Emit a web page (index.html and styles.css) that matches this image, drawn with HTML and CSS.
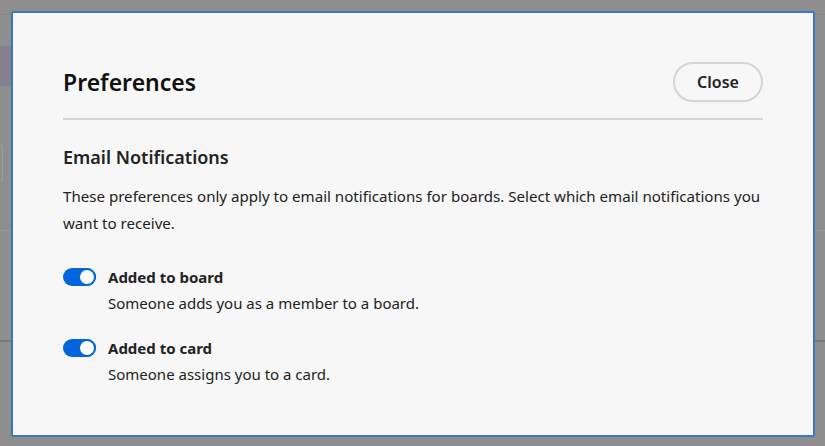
FILE: index.html
```html
<!DOCTYPE html>
<html lang="en">
<head>
<meta charset="utf-8">
<title>Preferences</title>
<link rel="stylesheet" href="styles.css">
</head>
<body>
<div class="backdrop">
  <div class="bg-top"></div>
  <div class="bg-tab"></div>
  <div class="bg-mid"><div class="bg-box"></div></div>
  <div class="bg-row"></div>
</div>
<div class="dialog" role="dialog">
  <div class="dialog-header">
    <h1 class="title">Preferences</h1>
    <button class="close-btn">Close</button>
  </div>
  <hr class="divider">
  <h2 class="section-title">Email Notifications</h2>
  <p class="intro">These preferences only apply to email notifications for boards. Select which email notifications you want to receive.</p>
  <div class="pref-list">
    <div class="pref">
      <span class="toggle"><span class="thumb"></span></span>
      <div class="pref-text">
        <div class="pref-name">Added to board</div>
        <div class="pref-desc">Someone adds you as a member to a board.</div>
      </div>
    </div>
    <div class="pref">
      <span class="toggle"><span class="thumb"></span></span>
      <div class="pref-text">
        <div class="pref-name">Added to card</div>
        <div class="pref-desc">Someone assigns you to a card.</div>
      </div>
    </div>
  </div>
</div>
</body>
</html>
```

FILE: styles.css
```css
html, body {
  margin: 0;
  height: 100%;
}
body {
  background: #8e8e8e;
  font-family: "Noto Sans", "Open Sans", sans-serif;
  color: #222;
  overflow: hidden;
  position: relative;
}
.backdrop {
  display: flex;
  flex-direction: column;
}
.bg-top {
  height: 14px;
  border-bottom: 1px solid #858585;
}
.bg-tab {
  margin-top: 31px;
  width: 11px;
  height: 40px;
  background: #857f90;
}
.bg-mid {
  height: 144px;
  border-bottom: 1px solid #9a9a9a;
  display: flex;
  align-items: center;
}
.bg-box {
  width: 2px;
  height: 34px;
  margin-top: 10px;
  border: 1px solid #9c9c9c;
  border-left: none;
}
.bg-row {
  height: 109px;
  border-bottom: 2px solid #7b7b7b;
}
.dialog {
  position: absolute;
  left: 11px;
  top: 11px;
  width: 700px;
  height: 422px;
  border: 2px solid #3a76c6;
  border-radius: 2px;
  background: #f7f7f7;
  padding: 0 50px;
  box-sizing: content-box;
}
.dialog-header {
  display: flex;
  align-items: center;
  justify-content: space-between;
  padding-top: 48px;
  height: 41px;
}
.title {
  margin: 0;
  font-size: 23px;
  font-weight: 600;
  color: #111;
}
.close-btn {
  width: 90px;
  height: 40px;
  border: 2px solid #d5d5d5;
  border-radius: 20px;
  background: transparent;
  font-family: inherit;
  font-size: 16px;
  font-weight: 600;
  color: #222;
  padding: 0;
}
.divider {
  margin: 16px 0 0;
  border: none;
  height: 2px;
  background: #d5d5d5;
}
.section-title {
  margin: 25px 0 0;
  font-size: 18px;
  font-weight: 600;
  color: #222;
}
.intro {
  margin: 14px 0 0;
  font-size: 15.1px;
  line-height: 27px;
  color: #222;
}
.pref-list {
  margin-top: 27px;
  display: flex;
  flex-direction: column;
  gap: 19px;
}
.pref {
  display: flex;
  gap: 12px;
}
.toggle {
  width: 33px;
  height: 18px;
  border-radius: 9px;
  background: #0265dc;
  margin-top: 4px;
  display: flex;
  align-items: center;
  justify-content: flex-end;
  box-sizing: border-box;
  flex-shrink: 0;
}
.thumb {
  width: 14px;
  height: 14px;
  border-radius: 50%;
  background: #fff;
  border: 2px solid #0265dc;
}
.pref-name {
  font-size: 15px;
  font-weight: 700;
  line-height: 26px;
}
.pref-desc {
  font-size: 15px;
  line-height: 26px;
}
```
